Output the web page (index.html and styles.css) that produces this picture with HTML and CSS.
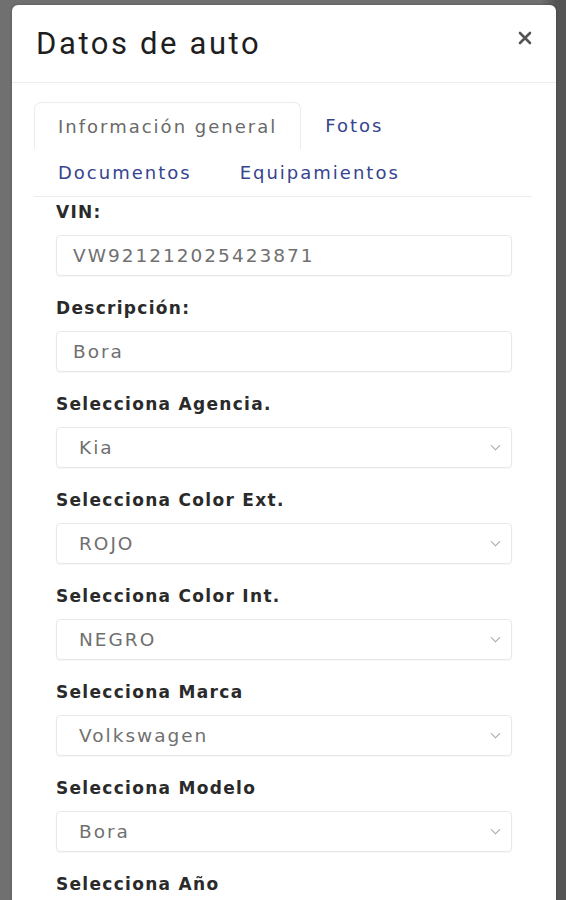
FILE: index.html
```html
<!DOCTYPE html>
<html lang="es">
<head>
<meta charset="utf-8">
<title>Datos de auto</title>
<link rel="stylesheet" href="styles.css">
</head>
<body>
<div class="backdrop">
  <div class="modal">
    <div class="modal-header">
      <h2 class="modal-title">Datos de auto</h2>
      <button class="close" type="button" aria-label="Cerrar">
        <svg width="14" height="14" viewBox="0 0 14 14"><path d="M2 2 L12 12 M12 2 L2 12" stroke="#555" stroke-width="2.6" stroke-linecap="round"/></svg>
      </button>
    </div>
    <div class="modal-body">
      <ul class="tabs">
        <li class="tab active">Información general</li>
        <li class="tab">Fotos</li>
        <li class="tab">Documentos</li>
        <li class="tab">Equipamientos</li>
      </ul>
      <form class="form">
        <div class="group">
          <label class="label">VIN:</label>
          <div class="field">VW921212025423871</div>
        </div>
        <div class="group">
          <label class="label">Descripción:</label>
          <div class="field">Bora</div>
        </div>
        <div class="group">
          <label class="label">Selecciona Agencia.</label>
          <div class="field select">Kia<span class="chev"></span></div>
        </div>
        <div class="group">
          <label class="label">Selecciona Color Ext.</label>
          <div class="field select">ROJO<span class="chev"></span></div>
        </div>
        <div class="group">
          <label class="label">Selecciona Color Int.</label>
          <div class="field select">NEGRO<span class="chev"></span></div>
        </div>
        <div class="group">
          <label class="label">Selecciona Marca</label>
          <div class="field select">Volkswagen<span class="chev"></span></div>
        </div>
        <div class="group">
          <label class="label">Selecciona Modelo</label>
          <div class="field select">Bora<span class="chev"></span></div>
        </div>
        <div class="group">
          <label class="label">Selecciona Año</label>
          <div class="field select">2020<span class="chev"></span></div>
        </div>
      </form>
    </div>
  </div>
</div>
</body>
</html>
```
FILE: styles.css
```css
html, body {
  margin: 0;
  padding: 0;
  height: 100%;
  overflow: hidden;
}
body {
  background: linear-gradient(to right, #707070 0, #707070 540px, #555 556px, #555 100%);
  font-family: "Liberation Sans", Arial, sans-serif;
}
.backdrop {
  padding: 5px 10px 0 12px;
}
.modal {
  width: 544px;
  background: #fff;
  border-radius: 6px 6px 0 0;
  box-shadow: 0 0 3px rgba(0,0,0,0.25);
  height: 1000px;
}
.modal-header {
  display: flex;
  justify-content: space-between;
  align-items: flex-start;
  height: 77px;
  border-bottom: 1px solid #ececec;
  padding: 0 24px;
}
.modal-title {
  margin: 22px 0 0 0;
  font-family: Roboto, "Liberation Sans", sans-serif;
  font-weight: 400;
  font-size: 31px;
  letter-spacing: 2.6px;
  color: #1e1e1e;
  line-height: 34px;
}
.close {
  border: 0;
  background: transparent;
  padding: 0;
  margin: 26px 0 0 0;
  width: 14px;
  height: 14px;
  display: flex;
}
.modal-body {
  padding: 19px 24px 0 22px;
}
.tabs {
  list-style: none;
  margin: 0;
  padding: 0;
  display: flex;
  flex-wrap: wrap;
  width: 498px;
  border-bottom: 1px solid #ececec;
  font-family: "DejaVu Sans", sans-serif;
  font-size: 18px;
  letter-spacing: 2px;
}
.tab {
  height: 47px;
  line-height: 47px;
  padding: 0 24px;
  box-sizing: border-box;
  color: #36448f;
  white-space: nowrap;
}
.tab.active {
  color: #6a6a6a;
  border: 1px solid #ececec;
  border-bottom: 0;
  border-radius: 7px 7px 0 0;
  padding: 0 23px;
}
.form {
  padding: 3px 20px 0 22px;
}
.group {
  height: 96px;
}
.label {
  display: block;
  height: 24px;
  line-height: 24px;
  font-family: "DejaVu Sans", sans-serif;
  font-weight: 700;
  font-size: 17px;
  letter-spacing: 1.3px;
  color: #2a2a2a;
}
.field {
  margin-top: 11px;
  height: 41px;
  box-sizing: border-box;
  border: 1px solid #e8e8e8;
  border-radius: 4px;
  padding: 0 16px;
  display: flex;
  align-items: center;
  justify-content: space-between;
  font-family: "DejaVu Sans", sans-serif;
  font-size: 18.5px;
  letter-spacing: 2px;
  color: #707070;
  box-shadow: 0 1px 2px rgba(0,0,0,0.04);
}
.field.select {
  padding: 0 12px 0 22px;
}
.chev {
  width: 6px;
  height: 6px;
  border-right: 1.5px solid #aaa;
  border-bottom: 1.5px solid #aaa;
  transform: rotate(45deg);
  margin-top: -4px;
}
```
